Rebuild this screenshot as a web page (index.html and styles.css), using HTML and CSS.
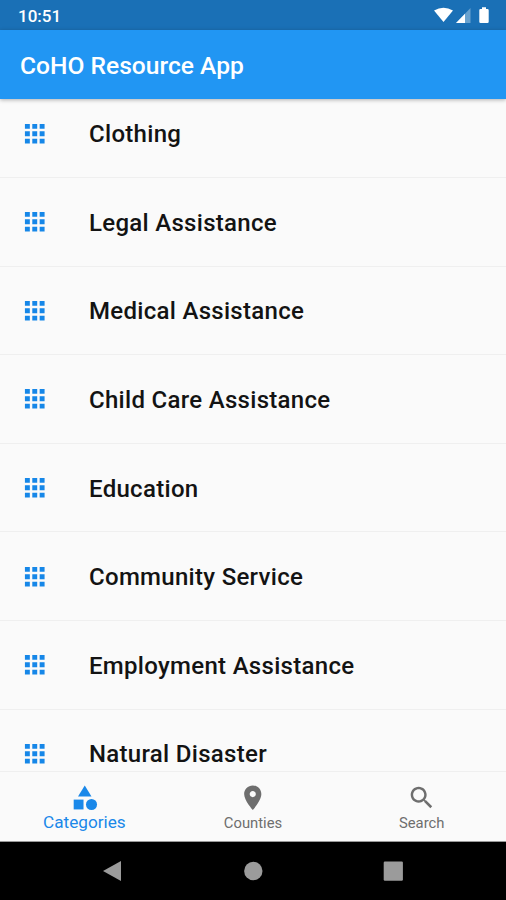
FILE: index.html
```html
<!DOCTYPE html>
<html lang="en">
<head>
    <meta charset="UTF-8">
    <meta name="viewport" content="width=device-width, initial-scale=1.0">
    <title>CoHO Resource App</title>
    <link rel="stylesheet" href="styles.css">
</head>
<body>
    <!-- shared icons -->
    <svg class="sprite" width="0" height="0">
        <symbol id="icon-apps" viewBox="0 0 24 24">
            <path d="M4 8h4V4H4v4zm6 12h4v-4h-4v4zm-6 0h4v-4H4v4zm0-6h4v-4H4v4zm6 0h4v-4h-4v4zm6-10v4h4V4h-4zm-6 4h4V4h-4v4zm6 6h4v-4h-4v4zm0 6h4v-4h-4v4z"/>
        </symbol>
    </svg>

    <div class="status-bar">
        <span class="time">10:51</span>
        <svg class="status-icons" width="60" height="20" viewBox="0 0 60 20">
            <path d="M0 4.500Q9.500-.8 19 4.500L9.500 16z"/>
            <path d="M36.500 2v15H22z" opacity=".35"/>
            <path d="M31 7.700v9.300H22z"/>
            <path d="M45.300 4.200q0-1.200 1.200-1.200h1.500V1.200h4V3h1.500q1.200 0 1.200 1.200v11.600q0 1.200-1.200 1.200h-7q-1.200 0-1.200-1.200z"/>
        </svg>
    </div>

    <header class="app-bar">
        <h1>CoHO Resource App</h1>
    </header>

    <main class="list-view">
        <ul class="category-list">
            <li><svg class="icon"><use href="#icon-apps"/></svg><span>Clothing</span></li>
            <li><svg class="icon"><use href="#icon-apps"/></svg><span>Legal Assistance</span></li>
            <li><svg class="icon"><use href="#icon-apps"/></svg><span>Medical Assistance</span></li>
            <li><svg class="icon"><use href="#icon-apps"/></svg><span>Child Care Assistance</span></li>
            <li><svg class="icon"><use href="#icon-apps"/></svg><span>Education</span></li>
            <li><svg class="icon"><use href="#icon-apps"/></svg><span>Community Service</span></li>
            <li><svg class="icon"><use href="#icon-apps"/></svg><span>Employment Assistance</span></li>
            <li><svg class="icon"><use href="#icon-apps"/></svg><span>Natural Disaster</span></li>
        </ul>
    </main>

    <nav class="bottom-nav">
        <a class="nav-item active">
            <svg class="icon" viewBox="0 0 24 24">
                <path d="M12 2l-5.500 9h11z"/>
                <circle cx="17.500" cy="17.500" r="4.500"/>
                <path d="M3 13.500h8v8H3z"/>
            </svg>
            <span>Categories</span>
        </a>
        <a class="nav-item">
            <svg class="icon" viewBox="0 0 24 24">
                <path d="M12 2C8.130 2 5 5.130 5 9c0 5.250 7 13 7 13s7-7.750 7-13c0-3.870-3.130-7-7-7zm0 9.500c-1.380 0-2.500-1.120-2.500-2.500s1.120-2.500 2.500-2.500 2.500 1.120 2.500 2.500-1.120 2.500-2.500 2.500z"/>
            </svg>
            <span>Counties</span>
        </a>
        <a class="nav-item">
            <svg class="icon" viewBox="0 0 24 24">
                <path d="M15.500 14h-.79l-.28-.27C15.410 12.590 16 11.110 16 9.500 16 5.910 13.090 3 9.500 3S3 5.910 3 9.500 5.910 16 9.500 16c1.610 0 3.090-.59 4.230-1.570l.27.28v.79l5 4.990L20.490 19l-4.990-5zm-6 0C7.010 14 5 11.990 5 9.500S7.010 5 9.500 5 14 7.010 14 9.500 11.990 14 9.500 14z"/>
            </svg>
            <span>Search</span>
        </a>
    </nav>

    <div class="system-nav">
        <svg width="22" height="22" viewBox="0 0 22 22"><path d="M1 11L19 1v20z"/></svg>
        <svg width="22" height="22" viewBox="0 0 22 22"><circle cx="11.300" cy="11" r="9.200"/></svg>
        <svg width="22" height="22" viewBox="0 0 22 22"><rect x="1.700" y="1.500" width="19.200" height="19.200" rx="1.200"/></svg>
    </div>
</body>
</html>
```
FILE: styles.css
```css
* {
    box-sizing: border-box;
}
body {
    margin: 0;
    height: 900px;
    display: flex;
    flex-direction: column;
    overflow: hidden;
    font-family: Roboto, sans-serif;
    background-color: #fafafa;
}
.sprite {
    display: none;
}
.status-bar {
    flex: none;
    height: 30px;
    padding: 1px 12px 0 18px;
    display: flex;
    align-items: center;
    justify-content: space-between;
    background-color: #1a70b6;
    color: #fff;
}
.time {
    font-size: 17px;
    font-weight: 500;
}
.status-icons {
    fill: #fff;
}
.app-bar {
    flex: none;
    height: 69px;
    padding: 2px 20px 0;
    display: flex;
    align-items: center;
    background-color: #2196f3;
    color: #fff;
    z-index: 1;
    box-shadow: 0 1px 4px rgba(0, 0, 0, 0.3);
}
h1 {
    margin: 0;
    font-size: 24.600px;
    font-weight: 500;
}
.list-view {
    flex: 1;
    min-height: 0;
    overflow: hidden;
}
/* the list is scrolled a little under the app bar */
.category-list {
    list-style: none;
    margin: -9.500px 0 0;
    padding: 0;
}
.category-list li {
    height: 88.600px;
    padding-left: 20px;
    display: flex;
    align-items: center;
    border-bottom: 1px solid #efefef;
    color: #131313;
    font-size: 24px;
    font-weight: 500;
    letter-spacing: 0.300px;
}
.category-list span {
    padding-top: 2px;
}
.icon {
    width: 29.500px;
    height: 29.500px;
    flex: none;
    fill: currentColor;
}
.category-list .icon {
    margin-right: 39.500px;
    color: #1687e8;
}
.bottom-nav {
    flex: none;
    height: 71px;
    display: flex;
    border-top: 1px solid #efefef;
    border-bottom: 1px solid #999;
}
.nav-item {
    flex: 1;
    padding-top: 10.500px;
    display: flex;
    flex-direction: column;
    align-items: center;
    color: #6e6e6e;
    font-size: 14.800px;
    line-height: 23px;
}
.nav-item.active {
    color: #1a88e9;
    font-size: 17.200px;
    line-height: 20px;
}
.system-nav {
    flex: none;
    height: 58px;
    padding: 0 102px;
    display: flex;
    align-items: center;
    justify-content: space-between;
    background-color: #000;
    fill: #9b9b9b;
}
```
